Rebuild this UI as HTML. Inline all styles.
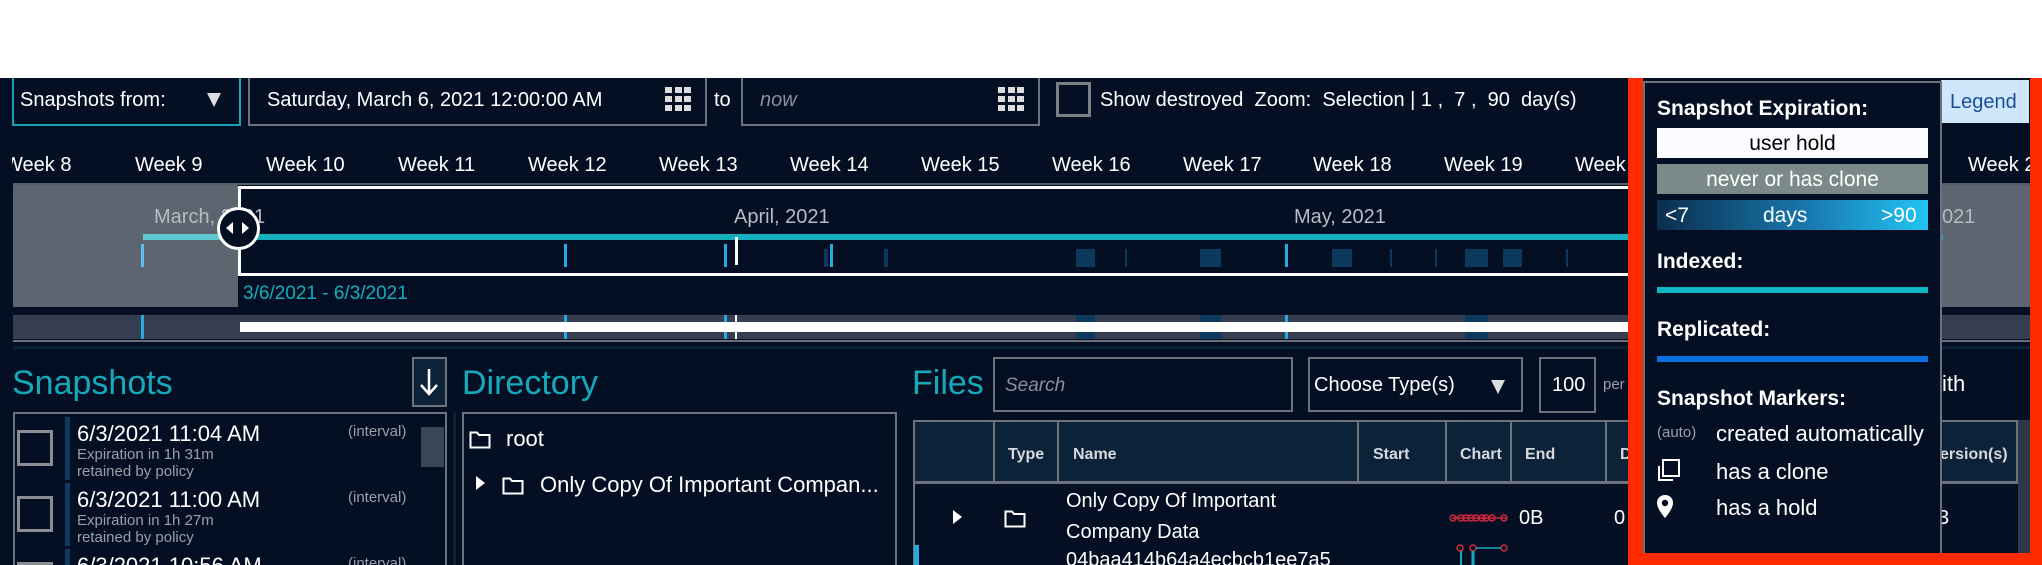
<!DOCTYPE html>
<html><head><meta charset="utf-8"><style>
*{margin:0;padding:0;box-sizing:border-box}
html,body{width:2042px;height:565px;overflow:hidden}
body{background:#fff;font-family:"Liberation Sans",sans-serif}
#r{position:relative;width:2042px;height:565px;overflow:hidden}
.a{position:absolute}
.t{position:absolute;white-space:nowrap;line-height:1}
#app{position:absolute;left:0;top:78px;width:2042px;height:487px;background:#050f24;overflow:hidden}
.box{position:absolute;border:2px solid #6d737c}
.wk{position:absolute;top:155px;font-size:20px;color:#fff;white-space:nowrap;line-height:1}
.mk{position:absolute;width:3px;background:#2aa8e2}
.dk{position:absolute;background:#0b3a5c}
</style></head><body><div id="r">
<div id="app"></div>
<!-- top bar -->
<div class="a" style="left:12px;top:78px;width:229px;height:48px;border:2px solid #16a3b3;border-top:none"></div>
<div class="t" style="left:20px;top:90px;font-size:20px;color:#fff">Snapshots from:</div>
<div class="a" style="left:207px;top:93px;width:0;height:0;border-left:7px solid transparent;border-right:7px solid transparent;border-top:14px solid #ddd"></div>
<div class="box" style="left:248px;top:78px;width:459px;height:48px;border-top:none"></div>
<div class="t" style="left:267px;top:90px;font-size:20px;color:#fff">Saturday, March 6, 2021 12:00:00 AM</div>
<svg class="a" style="left:665px;top:87px" width="26" height="24"><g fill="#ddd"><rect x="0" y="0" width="7" height="6"/><rect x="10" y="0" width="7" height="6"/><rect x="19" y="0" width="7" height="6"/><rect x="0" y="9" width="7" height="6"/><rect x="10" y="9" width="7" height="6"/><rect x="19" y="9" width="7" height="6"/><rect x="0" y="18" width="7" height="6"/><rect x="10" y="18" width="7" height="6"/><rect x="19" y="18" width="7" height="6"/></g></svg>
<div class="t" style="left:714px;top:90px;font-size:20px;color:#fff">to</div>
<div class="box" style="left:741px;top:78px;width:299px;height:48px;border-top:none"></div>
<div class="t" style="left:760px;top:90px;font-size:20px;color:#8a8f98;font-style:italic">now</div>
<svg class="a" style="left:998px;top:87px" width="26" height="24"><g fill="#ddd"><rect x="0" y="0" width="7" height="6"/><rect x="10" y="0" width="7" height="6"/><rect x="19" y="0" width="7" height="6"/><rect x="0" y="9" width="7" height="6"/><rect x="10" y="9" width="7" height="6"/><rect x="19" y="9" width="7" height="6"/><rect x="0" y="18" width="7" height="6"/><rect x="10" y="18" width="7" height="6"/><rect x="19" y="18" width="7" height="6"/></g></svg>
<div class="a" style="left:1056px;top:82px;width:35px;height:35px;border:3px solid #7a7f86"></div>
<div class="t" style="left:1100px;top:90px;font-size:20px;color:#fff">Show destroyed&nbsp;&nbsp;Zoom:&nbsp; Selection | 1 ,&nbsp; 7 ,&nbsp; 90&nbsp; day(s)</div>
<!-- weeks -->
<div class="a" style="left:12px;top:140px;width:2030px;height:40px;overflow:hidden">
<div class="wk" style="left:-8px;top:15px">Week 8</div><div class="wk" style="left:123px;top:15px">Week 9</div><div class="wk" style="left:254px;top:15px">Week 10</div><div class="wk" style="left:386px;top:15px">Week 11</div><div class="wk" style="left:516px;top:15px">Week 12</div><div class="wk" style="left:647px;top:15px">Week 13</div><div class="wk" style="left:778px;top:15px">Week 14</div><div class="wk" style="left:909px;top:15px">Week 15</div><div class="wk" style="left:1040px;top:15px">Week 16</div><div class="wk" style="left:1171px;top:15px">Week 17</div><div class="wk" style="left:1301px;top:15px">Week 18</div><div class="wk" style="left:1432px;top:15px">Week 19</div><div class="wk" style="left:1563px;top:15px">Week 20</div><div class="wk" style="left:1956px;top:15px">Week 21</div>
</div>
<!-- timeline -->
<div class="a" style="left:13px;top:183px;width:2017px;height:2px;background:#555c66"></div>
<div class="a" style="left:13px;top:185px;width:225px;height:122px;background:#5d6571"></div>
<div class="a" style="left:238px;top:186px;width:1705px;height:90px;border:3px solid #fff;border-right:none"></div>
<div class="a" style="left:1941px;top:185px;width:89px;height:122px;background:#5d6571"></div>
<div class="t" style="left:154px;top:207px;font-size:20px;color:#b8bcc2">March, 2021</div>
<div class="t" style="left:734px;top:207px;font-size:20px;color:#b8bcc2">April, 2021</div>
<div class="t" style="left:1294px;top:207px;font-size:20px;color:#b8bcc2">May, 2021</div>
<div class="t" style="left:1942px;top:207px;font-size:20px;color:#b8bcc2">021</div>
<div class="a" style="left:143px;top:234px;width:95px;height:6px;background:#5fc9d3"></div>
<div class="a" style="left:238px;top:234px;width:1705px;height:6px;background:#14aebd"></div>
<div class="mk" style="left:141px;top:244px;height:23px;background:#5bc0ee"></div>
<div class="mk" style="left:564px;top:244px;height:23px"></div>
<div class="mk" style="left:724px;top:244px;height:23px"></div>
<div class="mk" style="left:735px;top:237px;height:28px;background:#fff"></div>
<div class="dk" style="left:824px;top:249px;width:4px;height:18px"></div>
<div class="mk" style="left:830px;top:244px;height:23px"></div>
<div class="dk" style="left:884px;top:249px;width:4px;height:18px"></div>
<div class="dk" style="left:1076px;top:249px;width:19px;height:18px"></div>
<div class="dk" style="left:1125px;top:249px;width:2px;height:18px"></div>
<div class="dk" style="left:1200px;top:249px;width:21px;height:18px"></div>
<div class="mk" style="left:1285px;top:244px;height:23px"></div>
<div class="dk" style="left:1332px;top:249px;width:20px;height:18px"></div>
<div class="dk" style="left:1390px;top:249px;width:2px;height:18px"></div>
<div class="dk" style="left:1435px;top:249px;width:2px;height:18px"></div>
<div class="dk" style="left:1465px;top:249px;width:23px;height:18px"></div>
<div class="dk" style="left:1503px;top:249px;width:19px;height:18px"></div>
<div class="dk" style="left:1566px;top:249px;width:2px;height:18px"></div>
<div class="a" style="left:217px;top:207px;width:43px;height:43px;border-radius:50%;background:#050f24;border:3px solid #fff"></div>
<div class="a" style="left:226px;top:222px;width:0;height:0;border-top:6px solid transparent;border-bottom:6px solid transparent;border-right:7px solid #fff"></div>
<div class="a" style="left:242px;top:222px;width:0;height:0;border-top:6px solid transparent;border-bottom:6px solid transparent;border-left:7px solid #fff"></div>
<div class="t" style="left:243px;top:284px;font-size:19px;color:#14aebd">3/6/2021 - 6/3/2021</div>
<!-- mini bar -->
<div class="a" style="left:13px;top:315px;width:2017px;height:24px;background:#343e50"></div>
<div class="a" style="left:141px;top:315px;width:3px;height:24px;background:#2aa8e2"></div>
<div class="a" style="left:564px;top:315px;width:3px;height:24px;background:#2aa8e2"></div>
<div class="a" style="left:724px;top:315px;width:3px;height:24px;background:#2aa8e2"></div>
<div class="a" style="left:735px;top:315px;width:2px;height:24px;background:#fff"></div>
<div class="a" style="left:1076px;top:315px;width:19px;height:24px;background:#0b3a5c"></div>
<div class="a" style="left:1200px;top:315px;width:21px;height:24px;background:#0b3a5c"></div>
<div class="a" style="left:1285px;top:315px;width:3px;height:24px;background:#2aa8e2"></div>
<div class="a" style="left:1465px;top:315px;width:23px;height:24px;background:#0b3a5c"></div>
<div class="a" style="left:240px;top:322px;width:1700px;height:10px;background:#fff"></div>
<div class="a" style="left:13px;top:340px;width:2017px;height:2px;background:#6a7079"></div>
<div class="a" style="left:13px;top:346px;width:2017px;height:3px;background:#0c2238"></div>
<!-- Snapshots panel -->
<div class="t" style="left:12px;top:366px;font-size:34px;color:#16a9b9">Snapshots</div>
<div class="a" style="left:412px;top:357px;width:35px;height:50px;background:#0c2238;border:2px solid #6d737c"></div>
<svg class="a" style="left:419px;top:367px" width="20" height="30"><path d="M10 2V27M2 18L10 27L18 18" stroke="#fff" stroke-width="2.5" fill="none"/></svg>
<div class="a" style="left:13px;top:412px;width:434px;height:153px;border:2px solid #6d737c;border-bottom:none"></div>
<div class="a" style="left:421px;top:427px;width:23px;height:40px;background:#3a4556"></div>
<div class="a" style="left:17px;top:430px;width:36px;height:36px;border:3px solid #8a8e94"></div>
<div class="a" style="left:65px;top:417px;width:5px;height:63px;background:#0b3a5c"></div>
<div class="t" style="left:77px;top:423px;font-size:22px;color:#fff">6/3/2021 11:04 AM</div>
<div class="t" style="left:77px;top:447px;font-size:15px;color:#9aa0a8">Expiration in 1h 31m</div>
<div class="t" style="left:77px;top:464px;font-size:15px;color:#9aa0a8">retained by policy</div>
<div class="t" style="left:348px;top:424px;font-size:15px;color:#9aa0a8">(interval)</div>
<div class="a" style="left:17px;top:496px;width:36px;height:36px;border:3px solid #8a8e94"></div>
<div class="a" style="left:65px;top:483px;width:5px;height:63px;background:#0b3a5c"></div>
<div class="t" style="left:77px;top:489px;font-size:22px;color:#fff">6/3/2021 11:00 AM</div>
<div class="t" style="left:77px;top:513px;font-size:15px;color:#9aa0a8">Expiration in 1h 27m</div>
<div class="t" style="left:77px;top:530px;font-size:15px;color:#9aa0a8">retained by policy</div>
<div class="t" style="left:348px;top:490px;font-size:15px;color:#9aa0a8">(interval)</div>
<!-- bottom partial row (kept inside frame) -->
<div class="a" style="left:17px;top:562px;width:36px;height:3px;background:#8a8e94"></div>
<div class="a" style="left:65px;top:549px;width:5px;height:16px;background:#0b3a5c"></div>
<div class="t" style="left:77px;top:555px;height:10px;overflow:hidden;font-size:22px;color:#fff">6/3/2021 10:56 AM</div>
<div class="t" style="left:348px;top:556px;height:9px;overflow:hidden;font-size:15px;color:#9aa0a8">(interval)</div>
<div class="t" style="left:1066px;top:550px;height:15px;overflow:hidden;font-size:20px;color:#fff">04baa414b64a4ecbcb1ee7a5</div>
<!-- Directory -->
<div class="t" style="left:462px;top:366px;font-size:34px;color:#16a9b9">Directory</div>
<div class="a" style="left:453px;top:412px;width:3px;height:153px;background:#0c2238"></div>
<div class="a" style="left:462px;top:412px;width:435px;height:153px;border:2px solid #6d737c;border-bottom:none"></div>
<svg class="a" style="left:469px;top:429px" width="22" height="20"><path d="M1.5 3.5H8L10 6H20.5V18.5H1.5Z" stroke="#fff" stroke-width="2" fill="none"/></svg>
<div class="t" style="left:506px;top:428px;font-size:22px;color:#fff">root</div>
<div class="a" style="left:476px;top:476px;width:0;height:0;border-top:7px solid transparent;border-bottom:7px solid transparent;border-left:9px solid #fff"></div>
<svg class="a" style="left:502px;top:475px" width="22" height="20"><path d="M1.5 3.5H8L10 6H20.5V18.5H1.5Z" stroke="#fff" stroke-width="2" fill="none"/></svg>
<div class="t" style="left:540px;top:474px;font-size:22px;color:#fff">Only Copy Of Important Compan...</div>
<!-- Files -->
<div class="t" style="left:912px;top:366px;font-size:34px;color:#16a9b9">Files</div>
<div class="box" style="left:993px;top:357px;width:300px;height:55px"></div>
<div class="t" style="left:1005px;top:376px;font-size:19px;color:#8a8f98;font-style:italic">Search</div>
<div class="box" style="left:1308px;top:357px;width:215px;height:55px"></div>
<div class="t" style="left:1314px;top:375px;font-size:20px;color:#fff">Choose Type(s)</div>
<div class="a" style="left:1491px;top:380px;width:0;height:0;border-left:7px solid transparent;border-right:7px solid transparent;border-top:14px solid #ddd"></div>
<div class="box" style="left:1539px;top:357px;width:57px;height:56px"></div>
<div class="t" style="left:1552px;top:375px;font-size:20px;color:#fff">100</div>
<div class="t" style="left:1603px;top:377px;font-size:15px;color:#9aa0a8">per</div>
<div class="t" style="left:1942px;top:373px;font-size:22px;color:#fff">ith</div>
<!-- table -->
<div class="a" style="left:913px;top:420px;width:1105px;height:64px;background:#0c2238;border:2px solid #6d737c;border-bottom:3px solid #6d737c"></div>
<div class="a" style="left:2018px;top:420px;width:12px;height:145px;background:#2e3848"></div>
<div class="a" style="left:913px;top:484px;width:2px;height:81px;background:#6d737c"></div>
<div class="a" style="left:914px;top:545px;width:5px;height:20px;background:#2aa8e2"></div>
<div class="a" style="left:993px;top:420px;width:2px;height:64px;background:#6d737c"></div>
<div class="a" style="left:1057px;top:420px;width:2px;height:64px;background:#6d737c"></div>
<div class="a" style="left:1357px;top:420px;width:2px;height:64px;background:#6d737c"></div>
<div class="a" style="left:1445px;top:420px;width:2px;height:64px;background:#6d737c"></div>
<div class="a" style="left:1510px;top:420px;width:2px;height:64px;background:#6d737c"></div>
<div class="a" style="left:1605px;top:420px;width:2px;height:64px;background:#6d737c"></div>
<div class="t" style="left:1008px;top:447px;font-size:16px;font-weight:bold;color:#d6d9de">Type</div>
<div class="t" style="left:1073px;top:447px;font-size:16px;font-weight:bold;color:#d6d9de">Name</div>
<div class="t" style="left:1373px;top:447px;font-size:16px;font-weight:bold;color:#d6d9de">Start</div>
<div class="t" style="left:1460px;top:447px;font-size:16px;font-weight:bold;color:#d6d9de">Chart</div>
<div class="t" style="left:1525px;top:447px;font-size:16px;font-weight:bold;color:#d6d9de">End</div>
<div class="t" style="left:1620px;top:447px;font-size:16px;font-weight:bold;color:#d6d9de">D</div>
<div class="t" style="left:1940px;top:447px;font-size:16px;font-weight:bold;color:#d6d9de">ersion(s)</div>
<div class="a" style="left:953px;top:510px;width:0;height:0;border-top:7px solid transparent;border-bottom:7px solid transparent;border-left:9px solid #fff"></div>
<svg class="a" style="left:1004px;top:508px" width="22" height="20"><path d="M1.5 3.5H8L10 6H20.5V18.5H1.5Z" stroke="#fff" stroke-width="2" fill="none"/></svg>
<div class="t" style="left:1066px;top:491px;font-size:20px;color:#fff">Only Copy Of Important</div>
<div class="t" style="left:1066px;top:522px;font-size:20px;color:#fff">Company Data</div>
<svg class="a" style="left:1448px;top:510px" width="64" height="55"><g stroke="#d0283c" stroke-width="1.5" fill="none"><line x1="4" y1="8" x2="58" y2="8"/><circle cx="5" cy="8" r="3"/><circle cx="13" cy="8" r="3"/><circle cx="18" cy="8" r="3"/><circle cx="23" cy="8" r="3"/><circle cx="28" cy="8" r="3"/><circle cx="34" cy="8" r="3"/><circle cx="38" cy="8" r="3"/><circle cx="44" cy="8" r="3"/><circle cx="56" cy="8" r="3"/><circle cx="12" cy="38" r="3"/><circle cx="25" cy="38" r="3"/><circle cx="56" cy="38" r="3"/></g><line x1="28" y1="38" x2="53" y2="38" stroke="#14aebd" stroke-width="1.5"/><line x1="13" y1="41" x2="13" y2="55" stroke="#14aebd" stroke-width="2"/><line x1="25" y1="41" x2="25" y2="55" stroke="#14aebd" stroke-width="3"/></svg>
<div class="t" style="left:1519px;top:508px;font-size:20px;color:#fff">0B</div>
<div class="t" style="left:1614px;top:508px;font-size:20px;color:#fff">0</div>
<div class="t" style="left:1938px;top:508px;font-size:20px;color:#fff">3</div>
<!-- legend -->
<div class="a" style="left:1941px;top:80px;width:88px;height:43px;background:#cfe6fb"></div>
<div class="t" style="left:1950px;top:92px;font-size:20px;color:#1a4f9a">Legend</div>
<div class="a" style="left:1628px;top:78px;width:15px;height:487px;background:#ff2a00"></div>
<div class="a" style="left:2030px;top:78px;width:12px;height:487px;background:#ff2a00"></div>
<div class="a" style="left:1628px;top:553px;width:414px;height:12px;background:#ff2a00"></div>
<div class="a" style="left:1643px;top:81px;width:299px;height:472px;background:#050f24;border:2px solid #6d737c;border-bottom:none"></div>
<div class="t" style="left:1657px;top:98px;font-size:21px;font-weight:bold;color:#fff">Snapshot Expiration:</div>
<div class="a" style="left:1657px;top:128px;width:271px;height:30px;background:#fafcff"></div>
<div class="t" style="left:1657px;top:133px;width:271px;text-align:center;font-size:21px;color:#000">user hold</div>
<div class="a" style="left:1657px;top:164px;width:271px;height:30px;background:#7b8a88"></div>
<div class="t" style="left:1657px;top:169px;width:271px;text-align:center;font-size:21px;color:#fff">never or has clone</div>
<div class="a" style="left:1657px;top:200px;width:271px;height:30px;background:linear-gradient(90deg,#0a2e4e,#1a7fb5 60%,#22c4f4)"></div>
<div class="t" style="left:1665px;top:205px;font-size:21px;color:#fff">&lt;7</div>
<div class="t" style="left:1763px;top:205px;font-size:21px;color:#fff">days</div>
<div class="t" style="left:1881px;top:205px;font-size:21px;color:#fff">&gt;90</div>
<div class="t" style="left:1657px;top:251px;font-size:21px;font-weight:bold;color:#fff">Indexed:</div>
<div class="a" style="left:1657px;top:287px;width:271px;height:6px;background:#12b5c4"></div>
<div class="t" style="left:1657px;top:319px;font-size:21px;font-weight:bold;color:#fff">Replicated:</div>
<div class="a" style="left:1657px;top:356px;width:271px;height:6px;background:#0a6fe0"></div>
<div class="t" style="left:1657px;top:388px;font-size:21px;font-weight:bold;color:#fff">Snapshot Markers:</div>
<div class="t" style="left:1657px;top:425px;font-size:15px;color:#9aa0a8">(auto)</div>
<div class="t" style="left:1716px;top:423px;font-size:22px;color:#fff">created automatically</div>
<svg class="a" style="left:1656px;top:458px" width="26" height="26"><path d="M7 2H23V18H7Z" stroke="#fff" stroke-width="2" fill="none"/><path d="M3 8V22H17" stroke="#fff" stroke-width="2" fill="none"/></svg>
<div class="t" style="left:1716px;top:461px;font-size:22px;color:#fff">has a clone</div>
<svg class="a" style="left:1656px;top:494px" width="20" height="28"><path d="M9 1C4 1 1 4.5 1 9C1 15 9 24 9 24C9 24 17 15 17 9C17 4.5 14 1 9 1Z" fill="#fff"/><circle cx="9" cy="9" r="3.2" fill="#050f24"/></svg>
<div class="t" style="left:1716px;top:497px;font-size:22px;color:#fff">has a hold</div>
</div></body></html>
